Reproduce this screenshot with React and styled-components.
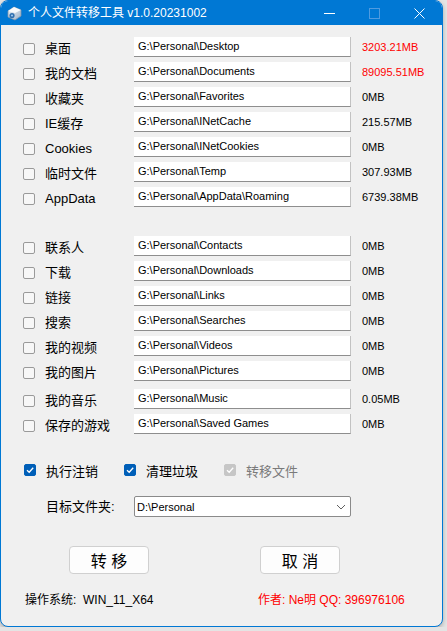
import React from 'react'
import styled, { createGlobalStyle } from 'styled-components'

const GlobalStyle = createGlobalStyle`
  body {
    margin: 0;
    background: #e4e4e4;
    font-family: "Liberation Sans", "Noto Sans CJK SC", sans-serif;
  }
`

const group1 = [
  { label: '桌面', path: 'G:\\Personal\\Desktop', size: '3203.21MB', big: true },
  { label: '我的文档', path: 'G:\\Personal\\Documents', size: '89095.51MB', big: true },
  { label: '收藏夹', path: 'G:\\Personal\\Favorites', size: '0MB' },
  { label: 'IE缓存', path: 'G:\\Personal\\INetCache', size: '215.57MB' },
  { label: 'Cookies', path: 'G:\\Personal\\INetCookies', size: '0MB' },
  { label: '临时文件', path: 'G:\\Personal\\Temp', size: '307.93MB' },
  { label: 'AppData', path: 'G:\\Personal\\AppData\\Roaming', size: '6739.38MB' },
]

const group2 = [
  { label: '联系人', path: 'G:\\Personal\\Contacts', size: '0MB' },
  { label: '下载', path: 'G:\\Personal\\Downloads', size: '0MB' },
  { label: '链接', path: 'G:\\Personal\\Links', size: '0MB' },
  { label: '搜索', path: 'G:\\Personal\\Searches', size: '0MB' },
  { label: '我的视频', path: 'G:\\Personal\\Videos', size: '0MB' },
  { label: '我的图片', path: 'G:\\Personal\\Pictures', size: '0MB' },
  { label: '我的音乐', path: 'G:\\Personal\\Music', size: '0.05MB', shift: true },
  { label: '保存的游戏', path: 'G:\\Personal\\Saved Games', size: '0MB' },
]

function AppIcon() {
  return (
    <svg width="17" height="16" viewBox="0 0 17 16">
      <defs>
        <linearGradient id="ic" x1="0" y1="0" x2="1" y2="1">
          <stop offset="0" stopColor="#eef3f8" />
          <stop offset="1" stopColor="#9fb4c9" />
        </linearGradient>
      </defs>
      <path d="M2 6 L8 2 L15 5 L15 11 L9 15 L2 12 Z" fill="url(#ic)" stroke="#7f95ab" strokeWidth="0.8" />
      <path d="M8 2 L15 5 L9 8 L2 6 Z" fill="#f7fafc" />
      <circle cx="6" cy="10.5" r="2.6" fill="#2f6fae" />
      <circle cx="6" cy="10.5" r="1.1" fill="#9cc6ee" />
    </svg>
  )
}

function CheckMark() {
  return (
    <svg width="10" height="10" viewBox="0 0 10 10">
      <path d="M2 5.2 L4.2 7.3 L8.2 2.8" fill="none" stroke="#fff" strokeWidth="1.3" />
    </svg>
  )
}

function Chevron() {
  return (
    <svg width="10" height="6" viewBox="0 0 10 6">
      <path d="M1 1 L5 5 L9 1" fill="none" stroke="#606060" strokeWidth="1" />
    </svg>
  )
}

function PathRow({ item }) {
  return (
    <Row $shift={item.shift}>
      <CheckGroup>
        <Box />
        <Label>{item.label}</Label>
      </CheckGroup>
      <PathInput>{item.path}</PathInput>
      <Size $big={item.big}>{item.size}</Size>
    </Row>
  )
}

export default function App() {
  return (
    <>
      <GlobalStyle />
      <Window>
        <TitleBar>
          <TitleLeft>
            <AppIcon />
            <TitleText>个人文件转移工具 v1.0.20231002</TitleText>
          </TitleLeft>
          <Controls>
            <Ctrl>
              <svg width="11" height="11" viewBox="0 0 11 11">
                <path d="M0 5.5 H11" stroke="#fff" strokeWidth="1" />
              </svg>
            </Ctrl>
            <Ctrl>
              <svg width="11" height="11" viewBox="0 0 11 11">
                <rect x="0.5" y="0.5" width="10" height="10" fill="none" stroke="#4f9be0" strokeWidth="1" />
              </svg>
            </Ctrl>
            <Ctrl>
              <svg width="11" height="11" viewBox="0 0 11 11">
                <path d="M0.5 0.5 L10.5 10.5 M10.5 0.5 L0.5 10.5" stroke="#fff" strokeWidth="1" />
              </svg>
            </Ctrl>
          </Controls>
        </TitleBar>
        <Body>
          <Group>
            {group1.map((it) => <PathRow key={it.label} item={it} />)}
          </Group>
          <Group $second>
            {group2.map((it) => <PathRow key={it.label} item={it} />)}
          </Group>
          <Options>
            <Option>
              <Box $checked><CheckMark /></Box>
              <Label>执行注销</Label>
            </Option>
            <Option>
              <Box $checked><CheckMark /></Box>
              <Label>清理垃圾</Label>
            </Option>
            <Option>
              <Box $disabled><CheckMark /></Box>
              <Label $disabled>转移文件</Label>
            </Option>
          </Options>
          <TargetRow>
            <Label>目标文件夹:</Label>
            <Combo>
              <span>D:\Personal</span>
              <Chevron />
            </Combo>
          </TargetRow>
          <Buttons>
            <Button>转 移</Button>
            <Button>取 消</Button>
          </Buttons>
          <Footer>
            <span>操作系统:&nbsp; WIN_11_X64</span>
            <Author>作者: Ne明 QQ: 396976106</Author>
          </Footer>
        </Body>
      </Window>
    </>
  )
}

const Window = styled.div`
  width: 443px;
  height: 627px;
  box-sizing: border-box;
  border: 1px solid #0078d4;
  border-radius: 8px;
  overflow: hidden;
  background: #f0f0f0;
  display: flex;
  flex-direction: column;
  box-shadow: 0 2px 4px rgba(0, 0, 0, 0.25);
`

const TitleBar = styled.div`
  height: 24px;
  background: #0078d4;
  display: flex;
  align-items: center;
  justify-content: space-between;
  color: #fff;
`

const TitleLeft = styled.div`
  display: flex;
  align-items: center;
  gap: 5px;
  padding-left: 5px;
`

const TitleText = styled.span`
  font-size: 12px;
  line-height: 16px;
`

const Controls = styled.div`
  display: flex;
  height: 100%;
`

const Ctrl = styled.div`
  width: 45px;
  display: flex;
  align-items: center;
  justify-content: center;
`

const Body = styled.div`
  display: flex;
  flex-direction: column;
  padding: 9px 0 0 22px;
`

const Group = styled.div`
  display: flex;
  flex-direction: column;
  margin-top: ${(p) => (p.$second ? '24px' : '0')};
`

const Row = styled.div`
  display: grid;
  grid-template-columns: 111px 217px auto;
  align-items: center;
  height: 25px;
  margin-top: ${(p) => (p.$shift ? '3px' : '0')};
`

const CheckGroup = styled.div`
  display: flex;
  align-items: center;
  gap: 10px;
  margin-top: 4px;
`

const Box = styled.span`
  width: 12px;
  height: 12px;
  box-sizing: border-box;
  border-radius: 2px;
  display: inline-flex;
  align-items: center;
  justify-content: center;
  flex: none;
  border: 1px solid ${(p) => (p.$checked ? '#005fb8' : p.$disabled ? '#c6c6c6' : '#9a9a9a')};
  background: ${(p) => (p.$checked ? '#005fb8' : p.$disabled ? '#c6c6c6' : '#f7f7f7')};
`

const Label = styled.span`
  font-size: 13px;
  line-height: 16px;
  color: ${(p) => (p.$disabled ? '#7a7a7a' : '#000')};
  white-space: nowrap;
`

const PathInput = styled.div`
  height: 20px;
  box-sizing: border-box;
  background: #fff;
  border-right: 1px solid #c2c2c2;
  border-bottom: 1px solid #8e8e8e;
  padding-left: 4px;
  font-size: 11px;
  line-height: 19px;
  color: #000;
  white-space: nowrap;
  overflow: hidden;
`

const Size = styled.span`
  padding-left: 11px;
  font-size: 11px;
  line-height: 14px;
  color: ${(p) => (p.$big ? '#ff0000' : '#000')};
`

const Options = styled.div`
  display: flex;
  margin-top: 24px;
  padding-left: 1px;
  height: 20px;
  align-items: center;
`

const Option = styled.div`
  width: 100px;
  display: flex;
  align-items: center;
  gap: 10px;
  ${Label} {
    margin-top: 3px;
  }
`

const TargetRow = styled.div`
  display: grid;
  grid-template-columns: 88px 217px;
  align-items: center;
  margin-top: 16px;
  padding-left: 23px;
  height: 21px;
`

const Combo = styled.div`
  height: 21px;
  box-sizing: border-box;
  border: 1px solid #8a8a8a;
  border-radius: 2px;
  background: #fff;
  display: flex;
  align-items: center;
  justify-content: space-between;
  padding: 0 4px 0 2px;
  font-size: 11px;
  color: #000;
`

const Buttons = styled.div`
  display: flex;
  gap: 111px;
  margin-top: 29px;
  padding-left: 46px;
`

const Button = styled.button`
  width: 80px;
  height: 28px;
  background: #fdfdfd;
  border: 1px solid #d0d0d0;
  border-radius: 4px;
  font-family: "Liberation Sans", "Noto Sans CJK SC", sans-serif;
  font-size: 16px;
  color: #000;
  padding: 0;
`

const Footer = styled.div`
  display: grid;
  grid-template-columns: 233px auto;
  margin-top: 18px;
  padding-left: 2px;
  font-size: 12px;
  line-height: 16px;
  color: #000;
`

const Author = styled.span`
  color: #ff0000;
`
